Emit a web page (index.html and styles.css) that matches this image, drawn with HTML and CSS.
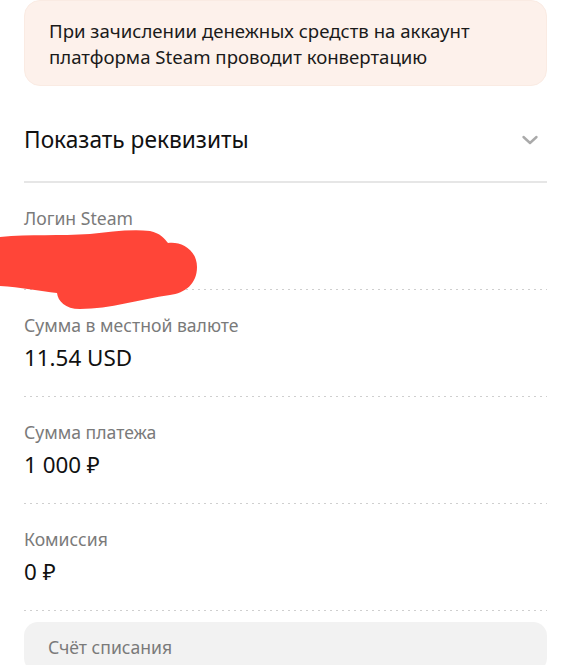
FILE: index.html
```html
<!DOCTYPE html>
<html lang="ru">
<head>
<meta charset="utf-8">
<link rel="stylesheet" href="styles.css">
</head>
<body>
<div class="page">
  <div class="notice">При зачислении денежных средств на аккаунт платформа Steam проводит конвертацию</div>
  <div class="header">
    <span class="header-title">Показать реквизиты</span>
    <svg class="chevron" width="18" height="12" viewBox="0 0 18 12"><path d="M2.5 3 L9 9 L15.5 3" fill="none" stroke="#aaaaaa" stroke-width="2.4" stroke-linecap="round" stroke-linejoin="round"/></svg>
  </div>
  <div class="row">
    <div class="label">Логин Steam</div>
    <div class="value">&nbsp;</div>
  </div>
  <div class="row">
    <div class="label">Сумма в местной валюте</div>
    <div class="value">11.54 USD</div>
  </div>
  <div class="row">
    <div class="label">Сумма платежа</div>
    <div class="value">1 000 ₽</div>
  </div>
  <div class="row">
    <div class="label">Комиссия</div>
    <div class="value">0 ₽</div>
  </div>
  <div class="account">
    <div class="label">Счёт списания</div>
  </div>
  <svg class="scribble" width="200" height="82" viewBox="0 0 200 82"><path d="M0 8 C30 5 60 7 90 5 C110 3 130 0 150 2 C160 4 165 10 168 14 C180 12 197 20 197 38 C197 55 185 64 170 66 C140 70 110 80 80 80 C65 80 58 72 57 64 C40 62 20 58 0 57 Z" fill="#ff4538"/></svg>
</div>
</body>
</html>
```
FILE: styles.css
```css
html, body {
  margin: 0;
  padding: 0;
  background: #ffffff;
}
body {
  font-family: "Noto Sans", Roboto, sans-serif;
  color: #1a1a1a;
}
.page {
  position: relative;
  padding: 0 24px;
  overflow: hidden;
  height: 665px;
}
.notice {
  background: #fdf1eb;
  border: 1px solid #faebe3;
  border-radius: 16px;
  padding: 17px 24px 15px;
  font-size: 18.6px;
  line-height: 26px;
  color: #1a1a1a;
}
.header {
  display: flex;
  align-items: center;
  justify-content: space-between;
  margin-top: 40px;
  padding-bottom: 27px;
  border-bottom: 2px solid #e6e6e6;
}
.header-title {
  font-size: 22.7px;
  line-height: 28px;
  color: #111;
}
.chevron {
  margin-right: 8px;
}
.row {
  padding: 25px 0 26px;
  display: flex;
  flex-direction: column;
  gap: 10px;
  background-image: linear-gradient(to right, #cfcfcf 2px, transparent 2px);
  background-size: 6px 1px;
  background-repeat: repeat-x;
  background-position: left bottom;
}
.label {
  font-size: 17.6px;
  line-height: 20px;
  color: #7a7a7a;
}
.value {
  font-size: 22.4px;
  line-height: 26px;
  color: #111;
}
.account {
  margin-top: 11px;
  background: #f2f2f2;
  border-radius: 14px;
  padding: 15px 24px;
}
.scribble {
  position: absolute;
  left: 0;
  top: 229px;
}
```
